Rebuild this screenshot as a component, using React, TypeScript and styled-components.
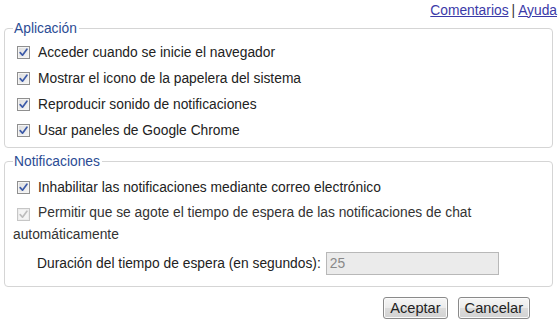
import React from "react";
import styled, { createGlobalStyle } from "styled-components";

const Global = createGlobalStyle`
  html, body { margin: 0; padding: 0; background: #ffffff; }
  body { font-family: "Liberation Sans", Arial, sans-serif; font-size: 13.8px; color: #222; }
`;

const Page = styled.div`
  width: 560px;
  height: 326px;
  box-sizing: border-box;
  padding: 0 7px 0 4px;
  background: #fff;
`;

const TopLinks = styled.div`
  height: 21px;
  display: flex;
  justify-content: flex-end;
  align-items: center;
  gap: 3px;
  margin-right: -4px;
  padding-bottom: 1px;
  box-sizing: border-box;
  color: #333;
  font-size: 13.8px;
`;

const Link = styled.a`
  color: #3a3aa8;
  text-decoration: underline;
  cursor: pointer;
`;

const Group = styled.fieldset<{ $top: number; $pt: number; $bottom: number }>`
  margin: 0;
  margin-top: ${(p) => p.$top}px;
  padding: ${(p) => p.$pt}px 8px ${(p) => p.$bottom}px 8px;
  border: 1px solid #d5d5d5;
  border-radius: 4px;
  min-width: 0;
`;

const Legend = styled.legend`
  padding: 0 2px 0 1px;
  color: #2b4c94;
  font-size: 13.8px;
  line-height: 15px;
`;

const Row = styled.label`
  display: flex;
  align-items: center;
  height: 26px;
  color: #222;
`;

const WrapRow = styled.div`
  line-height: 22px;
  padding-top: 2px;
  color: #333;
`;

const Box = styled.span<{ $disabled?: boolean }>`
  display: inline-flex;
  align-items: center;
  justify-content: center;
  box-sizing: border-box;
  width: 13px;
  height: 13px;
  margin: 0 8px 0 4px;
  vertical-align: -2px;
  border: 1px solid ${(p) => (p.$disabled ? "#c6c6c6" : "#8f8f8f")};
  background: ${(p) =>
    p.$disabled
      ? "linear-gradient(#f4f4f4, #f4f4f4)"
      : "linear-gradient(135deg, #dcdcdc, #f6f6f6)"};
  box-shadow: inset 0 0 0 1px ${(p) => (p.$disabled ? "#ececec" : "#f4f4f4")};
`;

const Check = ({ disabled }: { disabled?: boolean }) => (
  <Box $disabled={disabled}>
    <svg width="9" height="9" viewBox="0 0 9 9">
      <path
        d="M1.2 4.6 L3.5 7.2 L7.9 1.2"
        fill="none"
        stroke={disabled ? "#bdbdbd" : "#3c5aa8"}
        strokeWidth="1.7"
        strokeLinecap="round"
        strokeLinejoin="round"
      />
    </svg>
  </Box>
);

const FieldRow = styled.div`
  display: flex;
  align-items: center;
  height: 30px;
  padding-left: 24px;
  padding-top: 2px;
  color: #222;
`;

const Input = styled.div`
  box-sizing: border-box;
  width: 173px;
  height: 23px;
  margin-left: 5px;
  padding: 0 3px;
  line-height: 21px;
  border: 1px solid #b8b8b8;
  background: #ebebeb;
  color: #888;
`;

const Footer = styled.div`
  display: flex;
  justify-content: flex-end;
  gap: 10px;
  padding-top: 10px;
  margin-right: 23px;
`;

const Button = styled.button`
  box-sizing: border-box;
  height: 22px;
  padding: 0 6px;
  font-family: "Liberation Sans", Arial, sans-serif;
  font-size: 14.6px;
  color: #222;
  border: 1px solid #8a8a8a;
  border-radius: 3px;
  background: linear-gradient(#f6f6f6 0%, #ebebeb 50%, #dcdcdc 51%, #d2d2d2 100%);
  box-shadow: inset 0 0 0 1px #fbfbfb;
`;

export default function App() {
  return (
    <Page>
      <Global />
      <TopLinks>
        <Link>Comentarios</Link>
        <span>|</span>
        <Link>Ayuda</Link>
      </TopLinks>
      <Group $top={0} $pt={3} $bottom={4}>
        <Legend>Aplicación</Legend>
        <Row><Check />Acceder cuando se inicie el navegador</Row>
        <Row><Check />Mostrar el icono de la papelera del sistema</Row>
        <Row><Check />Reproducir sonido de notificaciones</Row>
        <Row><Check />Usar paneles de Google Chrome</Row>
      </Group>
      <Group $top={6} $pt={5} $bottom={8}>
        <Legend>Notificaciones</Legend>
        <Row><Check />Inhabilitar las notificaciones mediante correo electrónico</Row>
        <WrapRow>
          <Check disabled />
          Permitir que se agote el tiempo de espera de las notificaciones de chat automáticamente
        </WrapRow>
        <FieldRow>
          Duración del tiempo de espera (en segundos):
          <Input>25</Input>
        </FieldRow>
      </Group>
      <Footer>
        <Button>Aceptar</Button>
        <Button>Cancelar</Button>
      </Footer>
    </Page>
  );
}
